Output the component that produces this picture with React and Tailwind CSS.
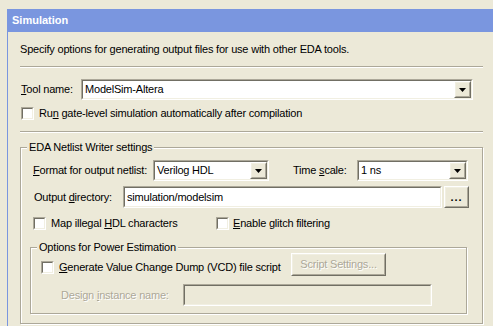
import React from 'react';

const Sunken = ({ className = '', bg = 'bg-white', children }) => (
  <div className={`border border-t-[#ACA899] border-l-[#ACA899] border-r-white border-b-white ${className}`}>
    <div className={`h-full border border-t-[#716F64] border-l-[#716F64] border-r-[#F1EFE2] border-b-[#F1EFE2] ${bg}`}>
      {children}
    </div>
  </div>
);

const Raised = ({ className = '', children }) => (
  <div className={`border border-t-white border-l-white border-r-[#716F64] border-b-[#716F64] ${className}`}>
    <div className="h-full border border-t-[#F1EFE2] border-l-[#F1EFE2] border-r-[#ACA899] border-b-[#ACA899] bg-[#ECE9D8] flex items-center justify-center">
      {children}
    </div>
  </div>
);

const Arrow = () => (
  <svg width="7" height="4" viewBox="0 0 7 4">
    <path d="M0 0h7L3.5 4z" fill="#000" />
  </svg>
);

const Combo = ({ value, className = '' }) => (
  <Sunken className={`h-[21px] ${className}`}>
    <div className="flex h-full">
      <span className="flex-1 pl-[2px] flex items-center">{value}</span>
      <Raised className="w-[17px] h-full">
        <Arrow />
      </Raised>
    </div>
  </Sunken>
);

const Check = () => <Sunken className="w-[13px] h-[13px] shrink-0" />;

const Group = ({ title, className = '', children }) => (
  <div className={`relative border border-[#ACA899] shadow-[inset_1px_1px_0_#fff,1px_1px_0_#fff] ${className}`}>
    <span className="absolute -top-[7px] left-[6px] px-[2px] bg-[#ECE9D8] leading-[13px]">{title}</span>
    {children}
  </div>
);

const Separator = () => (
  <div className="h-[2px] mr-[1px] border-t border-t-[#ACA899] border-b border-b-white" />
);

const disabled = 'text-[#ACA899] [text-shadow:1px_1px_0_#fff]';

export default function App() {
  return (
    <div className="w-[493px] h-[326px] overflow-hidden bg-[#ECE9D8] pt-[9px] pl-[7px] text-[11px] leading-[13px] tracking-[-0.2px] text-black font-['Liberation_Sans',Arial,sans-serif]">
      <div className="h-full border-l border-[#7A96DF]">
        <div className="h-[23px] bg-[#7A96DF] pl-[4px] flex items-center font-bold tracking-normal text-white">Simulation</div>

        <div className="pl-[12px] pr-[9px]">
          <p className="mt-[11px]">Specify options for generating output files for use with other EDA tools.</p>
          <div className="mt-[10px]">
            <Separator />
          </div>

          {/* tool */}
          <div className="mt-[11px] flex items-center">
            <span className="w-[61px] pl-[1px]">
              <u>T</u>ool name:
            </span>
            <Combo value="ModelSim-Altera" className="w-[392px]" />
          </div>

          <div className="mt-[7px] flex items-center gap-[5px] pl-[1px]">
            <Check />
            <span>
              Ru<u>n</u> gate-level simulation automatically after compilation
            </span>
          </div>

          <div className="mt-[11px]">
            <Separator />
          </div>

          {/* netlist writer */}
          <Group title="EDA Netlist Writer settings" className="mt-[14px] w-[463px] pt-[12px] pb-[9px]">
            <div className="flex items-center pl-[12px]">
              <span className="w-[120px]">
                <u>F</u>ormat for output netlist:
              </span>
              <Combo value="Verilog HDL" className="w-[116px]" />
              <span className="ml-[24px] w-[64px]">
                Time <u>s</u>cale:
              </span>
              <Combo value="1 ns" className="w-[111px]" />
            </div>

            <div className="mt-[5px] flex items-center pl-[12px]">
              <span className="w-[90px] pl-[1px]">
                Output <u>d</u>irectory:
              </span>
              <Sunken className="w-[319px] h-[22px]">
                <div className="h-full flex items-center pl-[2px]">simulation/modelsim</div>
              </Sunken>
              <Raised className="ml-[2px] w-[25px] h-[22px]">
                <span className="font-bold tracking-[1px] leading-[8px]">...</span>
              </Raised>
            </div>

            <div className="mt-[9px] flex items-center pl-[12px]">
              <div className="w-[183px] flex items-center gap-[5px]">
                <Check />
                <span>
                  Map illegal <u>H</u>DL characters
                </span>
              </div>
              <div className="flex items-center gap-[4px]">
                <Check />
                <span>
                  <u>E</u>nable glitch filtering
                </span>
              </div>
            </div>

            {/* power */}
            <Group title="Options for Power Estimation" className="mt-[17px] ml-[9px] w-[437px] pt-[5px] pb-[7px]">
              <div className="flex items-start pl-[10px]">
                <div className="w-[250px] flex items-center gap-[5px] mt-[8px]">
                  <Check />
                  <span>
                    <u>G</u>enerate Value Change Dump (VCD) file script
                  </span>
                </div>
                <Raised className="w-[95px] h-[23px]">
                  <span className={disabled}>Script Settings...</span>
                </Raised>
              </div>
              <div className="mt-[8px] flex items-center pl-[30px]">
                <span className={`w-[122px] ${disabled}`}>
                  Design <u>i</u>nstance name:
                </span>
                <Sunken className="w-[249px] h-[22px]" bg="bg-[#ECE9D8]" />
              </div>
            </Group>
          </Group>
        </div>
      </div>
    </div>
  );
}
